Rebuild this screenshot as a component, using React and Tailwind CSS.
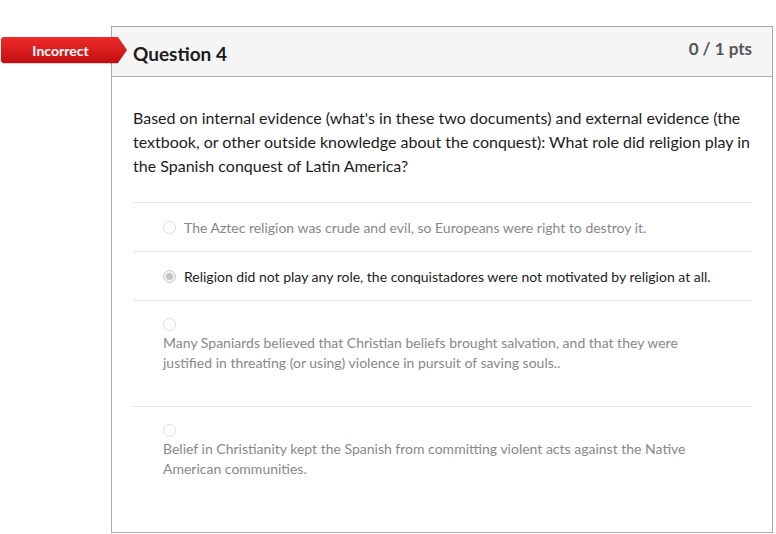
import React from "react";

const answers = [
  { text: "The Aztec religion was crude and evil, so Europeans were right to destroy it.", inline: true },
  { text: "Religion did not play any role, the conquistadores were not motivated by religion at all.", inline: true, selected: true },
  { text: "Many Spaniards believed that Christian beliefs brought salvation, and that they were justified in threating (or using) violence in pursuit of saving souls.." },
  { text: "Belief in Christianity kept the Spanish from committing violent acts against the Native American communities." },
];

const Radio = ({ checked }) => (
  <span
    className={
      "flex w-[13px] h-[13px] rounded-full border shrink-0 items-center justify-center " +
      (checked ? "border-[#c8c8c8] bg-[#f2f2f2]" : "border-[#dcdcdc] bg-white")
    }
  >
    {checked && <span className="block w-[7px] h-[7px] rounded-full bg-[#c4c4c4]" />}
  </span>
);

export default function App() {
  return (
    <div className="relative w-[776px] h-[534px] bg-white font-['Lato','Liberation_Sans',sans-serif] pt-[26px] pl-[111px]">
      {/* incorrect badge */}
      <div className="absolute left-[1px] top-[37px] flex items-center">
        <div className="h-[26px] w-[117px] rounded-l-[3px] bg-gradient-to-b from-[#ee2a2a] to-[#c30d0d] text-white text-[14px] font-bold flex items-center justify-center pl-[2px] shadow-[0_1px_1px_rgba(0,0,0,0.2)]">
          Incorrect
        </div>
        <div
          className="h-[26px] w-[9px] bg-gradient-to-b from-[#ee2a2a] to-[#c30d0d]"
          style={{ clipPath: "polygon(0 0, 100% 50%, 0 100%)" }}
        />
      </div>

      <div className="w-[662px] h-[507px] border border-[#aaaaaa]">
        <div className="h-[50px] bg-[#f5f5f5] border-b border-[#aaaaaa] flex justify-between pl-[21px] pr-[20px]">
          <span className="text-[19px] font-bold text-[#1d1d1d] mt-[15px] leading-[24px]">Question 4</span>
          <span className="text-[17px] font-bold text-[#555] mt-[11px] leading-[22px]">0 / 1 pts</span>
        </div>

        <div className="pl-[21px] pr-[20px] pt-[29px]">
          <p className="text-[16px] leading-[24px] text-[#1d1d1d]">
            Based on internal evidence (what's in these two documents) and external evidence (the textbook, or other outside knowledge about the conquest): What role did religion play in the Spanish conquest of Latin America?
          </p>

          <div className="mt-[24px]">
            {answers.map((a, i) =>
              a.inline ? (
                <div key={i} className="h-[49px] border-t border-[#e2e2e2] flex items-center pl-[30px] gap-[8px]">
                  <Radio checked={a.selected} />
                  <span className={"text-[14px] " + (a.selected ? "text-[#1d1d1d]" : "text-[#888]")}>{a.text}</span>
                </div>
              ) : (
                <div key={i} className={"border-t border-[#e2e2e2] pl-[30px] pt-[17px] " + (i === 2 ? "h-[106px]" : "")}>
                  <Radio />
                  <p className="text-[14px] leading-[20px] text-[#888] mt-[2px] pr-[30px]">{a.text}</p>
                </div>
              )
            )}
          </div>
        </div>
      </div>
    </div>
  );
}
